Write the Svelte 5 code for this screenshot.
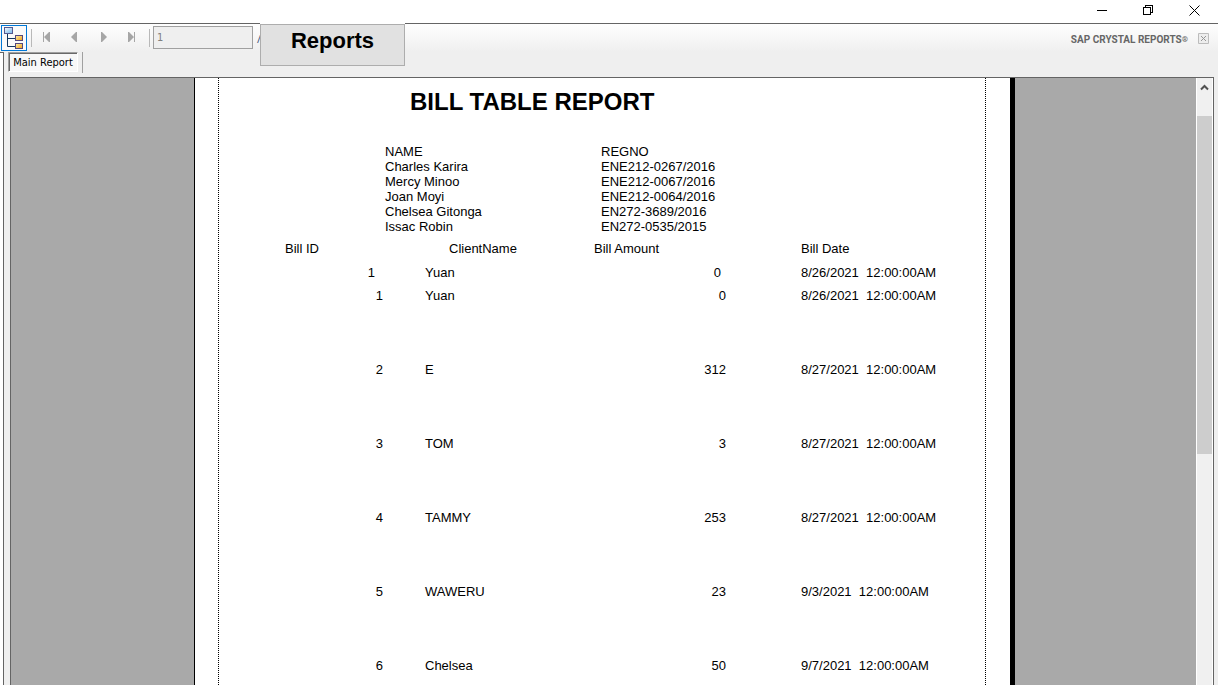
<script>
  const people = [
    ['Charles Karira', 'ENE212-0267/2016'],
    ['Mercy Minoo', 'ENE212-0067/2016'],
    ['Joan Moyi', 'ENE212-0064/2016'],
    ['Chelsea Gitonga', 'EN272-3689/2016'],
    ['Issac Robin', 'EN272-0535/2015'],
  ];
  const bills = [
    { id: 1, client: 'Yuan', amount: 0, date: '8/26/2021' },
    { id: 2, client: 'E', amount: 312, date: '8/27/2021' },
    { id: 3, client: 'TOM', amount: 3, date: '8/27/2021' },
    { id: 4, client: 'TAMMY', amount: 253, date: '8/27/2021' },
    { id: 5, client: 'WAWERU', amount: 23, date: '9/3/2021' },
    { id: 6, client: 'Chelsea', amount: 50, date: '9/7/2021' },
  ];
  const time = '12:00:00AM';
  const nav = [
    { label: 'First page', d: 'M0 0H1V10H0ZM7 0V10H6L1 5L6 0Z' },
    { label: 'Previous page', d: 'M6 0V10H5L0 5L5 0Z' },
    { label: 'Next page', d: 'M2 0H3L8 5L3 10H2Z' },
    { label: 'Last page', d: 'M1 0H2L7 5L2 10H1ZM7 0H8V10H7Z' },
  ];
  let page = $state('1');
</script>

<div class="window">
  <header class="titlebar">
    <button aria-label="Minimize"><svg width="10" height="10"><path d="M0 5.5H10" /></svg></button>
    <button aria-label="Restore"><svg width="10" height="10"><path d="M.5 2.5H7.5V9.5H.5ZM2.5 2.5V.5H9.5V7.5H7.5" /></svg></button>
    <button aria-label="Close"><svg class="cross" width="11" height="11"><path d="M.5 .5L10.5 10.5M10.5 .5L.5 10.5" /></svg></button>
  </header>

  <div class="toolbar">
    <button class="tree" aria-label="Toggle group tree">
      <svg width="20" height="22" viewBox="0 0 20 22">
        <defs>
          <linearGradient id="blue" x2="1" y2="1"><stop stop-color="#fff" /><stop offset="1" stop-color="#6fb4ea" /></linearGradient>
          <linearGradient id="gold" x2="1" y2="1"><stop stop-color="#fff3b0" /><stop offset="1" stop-color="#ee9a12" /></linearGradient>
        </defs>
        <path d="M3.5 6V19.5H11M3.5 11.5H11" fill="none" stroke="#12365f" />
        <rect x=".5" y=".5" width="8" height="6" fill="url(#blue)" stroke="#55598f" />
        <rect x="11.5" y="8.5" width="7" height="5" fill="url(#gold)" stroke="#554a7c" />
        <rect x="11.5" y="16.5" width="7" height="5" fill="url(#gold)" stroke="#554a7c" />
      </svg>
    </button>
    <span class="sep"></span>
    <div class="nav">
      {#each nav as n}
        <button aria-label={n.label} disabled><svg width="8" height="10"><path d={n.d} /></svg></button>
      {/each}
    </div>
    <span class="sep"></span>
    <input aria-label="Page number" bind:value={page} />
    <span class="slash">/</span>
    <span class="brand">SAP CRYSTAL REPORTS<small>®</small></span>
    <button class="shut" aria-label="Close report">
      <svg width="11" height="11"><path d="M.5 .5H10.5V10.5H.5Z" /><path class="x" d="M3 3L8 8M8 3L3 8" /></svg>
    </button>
    <button class="reports">Reports</button>
  </div>

  <div class="body">
    <div class="tabs"><button class="tab">Main Report</button><span class="end"></span></div>
    <div class="viewer">
      <main class="canvas">
        <article class="page">
          <section class="sheet">
            <h1>BILL TABLE REPORT</h1>
            <table class="people">
              <thead><tr><th>NAME</th><th>REGNO</th></tr></thead>
              <tbody>
                {#each people as [name, reg]}
                  <tr><td>{name}</td><td>{reg}</td></tr>
                {/each}
              </tbody>
            </table>
            <table class="bills">
              <colgroup><col class="c-id" /><col class="c-client" /><col class="c-amount" /><col class="c-date" /></colgroup>
              <thead><tr><th>Bill ID</th><th class="client">ClientName</th><th>Bill Amount</th><th>Bill Date</th></tr></thead>
              <tbody>
                <tr class="group"><td class="id">1</td><td>Yuan</td><td class="amount">0</td><td>8/26/2021&nbsp; {time}</td></tr>
                {#each bills as b}
                  <tr><td class="id">{b.id}</td><td>{b.client}</td><td class="amount">{b.amount}</td><td>{b.date}&nbsp; {time}</td></tr>
                {/each}
              </tbody>
            </table>
          </section>
        </article>
      </main>
      <div class="scroll">
        <button aria-label="Scroll up"><svg width="9" height="7"><path d="M1 5.5L4.5 2L8 5.5" /></svg></button>
        <div class="thumb"></div>
      </div>
    </div>
  </div>
</div>

<style>
  :global(body) { background: #fff; overflow: hidden; }
  * { box-sizing: border-box; }
  button { border: 0; padding: 0; background: none; display: flex; align-items: center; justify-content: center; }
  svg { display: block; }
  .window { height: 100vh; display: flex; flex-direction: column; font-family: "Liberation Sans", Arial, sans-serif; font-size: 13px; color: #000; }

  .titlebar { height: 23px; flex: none; display: flex; justify-content: flex-end; padding-right: 1px; }
  .titlebar button { width: 46px; height: 20px; }
  .titlebar path { fill: none; stroke: #000; shape-rendering: crispEdges; }
  .titlebar .cross path { shape-rendering: auto; }

  .toolbar { position: relative; height: 29px; flex: none; display: flex; align-items: center; padding: 0 9px 0 1px; border-top: 1px solid #646464; background: linear-gradient(#fefefe, #efefef); }
  .tree { width: 26px; height: 26px; border: 1px solid #0078d7; background: #fafafa; }
  .sep { width: 1px; height: 18px; background: #b9b9b9; margin-left: 4px; }
  .nav { display: flex; width: 113px; padding-left: 1px; }
  .nav button { width: 28px; height: 24px; padding-bottom: 2px; }
  .nav path { fill: #a6a6a6; }
  input { width: 100px; height: 23px; margin: 0 0 1px 3px; padding: 0 3px 1px; border: 1px solid #a0a0a0; border-radius: 0; background: #efefef; color: #808080; font: 11px "DejaVu Sans Condensed", Tahoma, sans-serif; outline: 0; }
  .slash { margin-left: 4px; color: #3b5275; font: 11px "Open Sans", sans-serif; }
  .brand { margin-left: auto; padding-top: 3px; color: #666; font: bold 10px Roboto, sans-serif; white-space: nowrap; }
  .brand small { font-size: 8px; font-weight: 900; vertical-align: 1px; }
  .shut { margin-left: 10px; }
  .shut path { fill: #ededed; stroke: #bcbcbc; }
  .shut .x { fill: none; stroke: #969696; }
  .reports { position: absolute; z-index: 1; left: 260px; top: 0; width: 145px; height: 42px; padding-bottom: 9px; background: #e1e1e1; border: 1px solid #adadad; box-shadow: 0 -1px #fff; font: bold 22px "Liberation Sans", Arial, sans-serif; color: #000; }

  .body { position: relative; flex: 1; min-height: 0; display: flex; flex-direction: column; margin-left: 3px; padding: 0 4px 0 6px; border-left: 1px solid #646464; background: #efefef; }
  .body::before { content: ""; position: absolute; left: -4px; top: 0; width: 4px; height: 1px; background: #646464; }
  .tabs { height: 25px; flex: none; display: flex; align-items: flex-start; margin-left: -2px; }
  .tab { width: 70px; height: 20px; padding-top: 1px; border: 1px solid; border-color: #a0a0a0 #fff #fff #a0a0a0; box-shadow: inset 1px 1px #696969; background: #f8f8f8; color: #000; font: 11px "DejaVu Sans Condensed", Tahoma, sans-serif; white-space: nowrap; }
  .end { width: 1px; height: 21px; margin-left: 4px; background: #a0a0a0; }
  .viewer { flex: 1; min-height: 0; display: flex; border: 1px solid #646464; border-bottom: 0; }
  .canvas { flex: 1; min-width: 0; display: flex; justify-content: center; padding-left: 2px; overflow: hidden; background: #a9a9a9; }
  .page { width: 100%; max-width: 821px; border-left: 1px solid #000; border-right: 5px solid #000; background: #fff; }
  .sheet {
    min-height: 100%; margin: 0 24px 0 23px; padding-top: 10px;
    background:
      repeating-linear-gradient(#000 0 1px, #fff 1px 2px) left / 1px 100% no-repeat,
      repeating-linear-gradient(#000 0 1px, #fff 1px 2px) right / 1px 100% no-repeat;
  }
  h1 { margin: 0 0 28px 192px; font-size: 24px; line-height: 28px; }
  table { border-collapse: collapse; table-layout: fixed; line-height: 15px; }
  th, td { padding: 0; font-weight: normal; text-align: left; vertical-align: top; white-space: nowrap; }
  .people { width: 432px; margin: 0 0 7px 167px; }
  .bills { width: 652px; margin-left: 67px; }
  .c-id { width: 140px; }
  .c-client { width: 169px; }
  .c-amount { width: 207px; }
  .c-date { width: 136px; }
  .bills th { height: 24px; }
  .bills .client { padding-left: 24px; }
  .bills td { height: 74px; }
  .bills .group td { height: 23px; }
  .bills .id { text-align: right; padding-right: 42px; }
  .bills .amount { text-align: right; padding-right: 75px; }
  .bills .group .id { padding-right: 50px; }
  .bills .group .amount { padding-right: 80px; }

  .scroll { width: 17px; flex: none; background: #f0f0f0; border-left: 1px solid #fff; border-right: 1px solid #fff; display: flex; flex-direction: column; }
  .scroll button { height: 18px; margin-bottom: 20px; }
  .scroll path { fill: none; stroke: #505050; stroke-width: 2; }
  .thumb { height: 338px; background: #cdcdcd; }
</style>
